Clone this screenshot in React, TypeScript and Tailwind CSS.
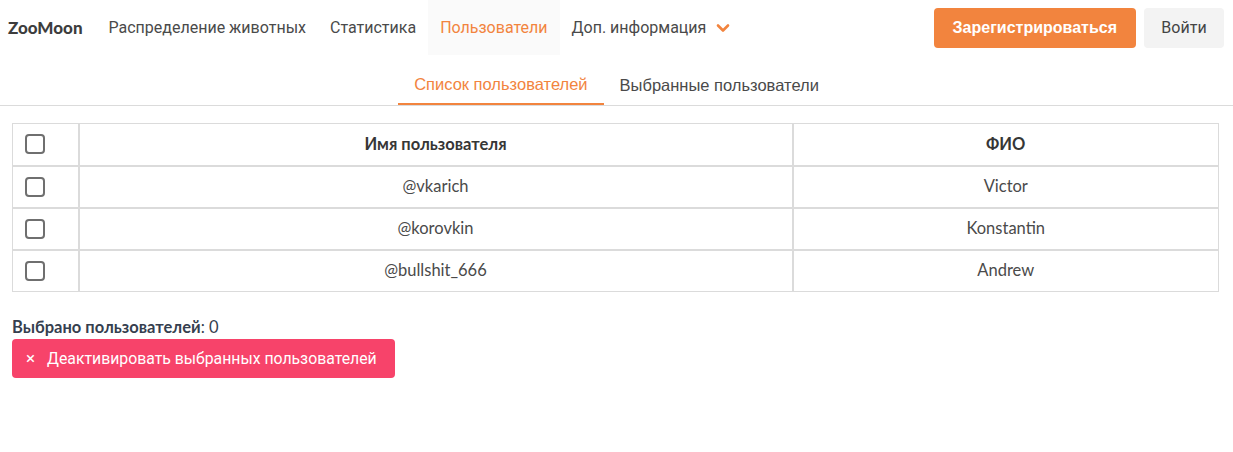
const users = [
  { username: "@vkarich", name: "Victor" },
  { username: "@korovkin", name: "Konstantin" },
  { username: "@bullshit_666", name: "Andrew" },
];

const Checkbox = () => (
  <span className="block w-[20px] h-[20px] rounded-[4px] border-2 border-[#6f6f6f] bg-white" />
);

const ChevronDown = () => (
  <svg width="14" height="10" viewBox="0 0 14 10" fill="none">
    <path d="M2 2.5 L7 7.5 L12 2.5" stroke="#f2843e" strokeWidth="2.6" strokeLinecap="round" strokeLinejoin="round" />
  </svg>
);

export default function App() {
  return (
    <div className="w-[1233px] h-[452px] bg-white">
      <nav className="flex items-stretch h-[55px] font-['Roboto',sans-serif]">
        <div className="flex items-center pl-[8px] pr-[14px] text-[17px] font-black text-[#3d3d3d] font-['Lato',sans-serif]">
          ZooMoon
        </div>
        <a className="flex items-center px-[12px] text-[16px] text-[#4a4a4a]">Распределение животных</a>
        <a className="flex items-center px-[12px] text-[16px] text-[#4a4a4a]">Статистика</a>
        <a className="flex items-center px-[12px] text-[16px] text-[#f2843e] bg-[#fafafa]">Пользователи</a>
        <a className="flex items-center gap-[10px] px-[12px] text-[16px] text-[#4a4a4a]">
          Доп. информация
          <ChevronDown />
        </a>
        <div className="ml-auto flex items-center gap-[8px] pr-[9px]">
          <button className="h-[40px] px-[19px] rounded-[4px] bg-[#f2843e] text-white text-[16px] font-bold font-['Liberation_Sans',sans-serif]">
            Зарегистрироваться
          </button>
          <button className="h-[40px] w-[80px] rounded-[4px] bg-[#f3f3f3] text-[#444] text-[16px]">
            Войти
          </button>
        </div>
      </nav>

      <div className="flex justify-center border-b border-[#dbdbdb] mt-[10px] font-['Liberation_Sans',sans-serif] text-[16.5px]">
        <div className="px-[16px] h-[40px] flex items-center text-[#f2843e] border-b-2 border-[#f2843e] -mb-px">
          Список пользователей
        </div>
        <div className="px-[16px] h-[40px] flex items-center text-[#4a4a4a]">Выбранные пользователи</div>
      </div>

      <div className="px-[12px] pt-[17px] font-['Lato',sans-serif]">
        <table className="w-[1207px] border-collapse border border-[#dbdbdb] text-[16.5px] text-[#4a4a4a]">
          <thead>
            <tr className="h-[42px]">
              <th className="w-[66px] border-r-2 border-b-2 border-[#dbdbdb] pl-[12px]">
                <Checkbox />
              </th>
              <th className="w-[714px] border-r-2 border-b-2 border-[#dbdbdb] font-bold text-[#363636]">Имя пользователя</th>
              <th className="border-b-2 border-[#dbdbdb] font-bold text-[#363636]">ФИО</th>
            </tr>
          </thead>
          <tbody>
            {users.map((u, i) => (
              <tr key={u.username} className="h-[42px]">
                <td className={`border-r-2 border-[#dbdbdb] pl-[12px] ${i < users.length - 1 ? "border-b-2" : ""}`}>
                  <Checkbox />
                </td>
                <td className={`border-r-2 border-[#dbdbdb] text-center ${i < users.length - 1 ? "border-b-2" : ""}`}>
                  {u.username}
                </td>
                <td className={`border-[#dbdbdb] text-center ${i < users.length - 1 ? "border-b-2" : ""}`}>
                  {u.name}
                </td>
              </tr>
            ))}
          </tbody>
        </table>

        <div className="mt-[24px] text-[16.5px] leading-[22px] text-[#363f4f]">
          <span className="font-bold">Выбрано пользователей</span>: 0
        </div>
        <button className="mt-[1px] h-[39px] w-[383px] flex items-center gap-[12px] pl-[14px] rounded-[4px] bg-[#f7436a] text-white text-[15.8px] font-['Roboto',sans-serif]">
          <span className="text-[17px] leading-none">×</span>
          Деактивировать выбранных пользователей
        </button>
      </div>
    </div>
  );
}
